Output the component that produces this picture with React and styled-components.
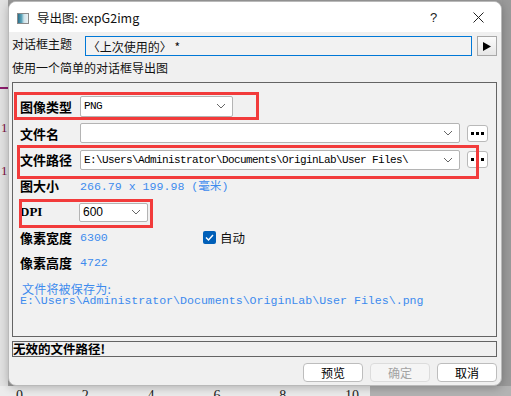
import React from 'react';
import styled, { createGlobalStyle } from 'styled-components';

const GlobalStyle = createGlobalStyle`
  * { box-sizing: border-box; }
  html, body { margin: 0; padding: 0; }
  body {
    width: 511px;
    height: 396px;
    overflow: hidden;
    font-family: "Noto Sans CJK SC", "Liberation Sans", sans-serif;
    background: #9c9c9c;
  }
`;

const CJK = `"Noto Sans CJK SC", "Liberation Sans", sans-serif`;

const Backdrop = styled.div`
  display: grid;
  grid-template-columns: 8px 494px 1fr;
  grid-template-rows: 386px 1fr;
  width: 511px;
  height: 396px;
  overflow: hidden;
`;

const LeftStrip = styled.div`
  background: #e2e2e2;
  display: flex;
  flex-direction: column;
  padding-top: 87px;
`;

const PlotLine = styled.div`
  height: 2px;
  background: #8d1d6e;
`;

const PlotTick = styled.span`
  margin-top: ${({ $top }) => $top}px;
  font-family: "Liberation Serif", serif;
  font-size: 13px;
  line-height: 13px;
  color: #7a1040;
  padding-left: 1px;
`;

const RightStrip = styled.div`
  background: #9a9a9a;
`;

const AxisRow = styled.div`
  grid-column: 1 / 4;
  display: flex;
  background: linear-gradient(to right, #ececec 0, #ececec 370px, #b3b3b3 370px);
  padding-left: 16px;
  overflow: hidden;
`;

const AxisNum = styled.span`
  width: 65.8px;
  font-family: "Liberation Serif", serif;
  font-size: 14px;
  line-height: 14px;
  margin-top: 3px;
  color: #222;
`;

const Window = styled.div`
  margin-top: 1px;
  display: flex;
  flex-direction: column;
  background: #f0f0f0;
  border: 1px solid #b9b9b9;
  border-radius: 8px;
  overflow: hidden;
  box-shadow: 0 2px 10px rgba(0, 0, 0, 0.25);
  position: relative;
  z-index: 1;
`;

const TitleBar = styled.div`
  height: 30px;
  display: flex;
  align-items: center;
  background: #ffffff;
  padding-left: 8px;
`;

const AppIcon = styled.div`
  width: 12px;
  height: 11px;
  border: 1px solid #8a8a8a;
  background: linear-gradient(to right, #2b6e8a 0, #5aa3b8 35%, #cfe3ea 60%, #e9f1f4 100%);
  margin-top: 2px;
`;

const Title = styled.span`
  margin-left: 8px;
  font-family: ${CJK};
  font-size: 12.5px;
  color: #111;
  flex: 1;
`;

const TitleButton = styled.span`
  width: 45px;
  display: flex;
  justify-content: center;
  align-items: center;
  font-family: "Liberation Sans", sans-serif;
  font-size: 13px;
  color: #222;
`;

const Body = styled.div`
  flex: 1;
  display: flex;
  flex-direction: column;
  padding: 4px 4px 0 3px;
`;

const ThemeRow = styled.div`
  display: flex;
  align-items: center;
  height: 20px;
`;

const PlainLabel = styled.span`
  font-family: ${CJK};
  font-size: 12px;
  color: #111;
  width: 73px;
  white-space: nowrap;
  line-height: 16px;
  margin-bottom: ${({ $lift }) => $lift || 0}px;
`;

const ThemeInput = styled.div`
  width: 389px;
  height: 20px;
  border: 1px solid #0078d7;
  background: #f2f2f2;
  display: flex;
  align-items: center;
  padding-left: 2px;
  font-family: ${CJK};
  font-size: 12px;
  color: #111;
`;

const ArrowButton = styled.div`
  width: 20px;
  height: 20px;
  margin-left: 5px;
  border: 1px solid #a8a8a8;
  background: linear-gradient(#fbfbfb, #e6e6e6);
  display: flex;
  align-items: center;
  justify-content: center;
`;

const Description = styled.div`
  font-family: ${CJK};
  font-size: 12px;
  color: #111;
  line-height: 16px;
  margin-top: 4px;
`;

const Panel = styled.div`
  position: relative;
  margin-top: 6px;
  height: 255px;
  border: 1px solid #646464;
  background: #f1f1f1;
  padding: 10px 0 0 7px;
  display: flex;
  flex-direction: column;
`;

const FieldRow = styled.div`
  display: flex;
  align-items: center;
  height: ${({ $h }) => $h}px;
`;

const FieldLabel = styled.span`
  width: 60px;
  font-family: ${({ $mono }) => ($mono ? `"Liberation Serif", serif` : CJK)};
  font-weight: 700;
  font-size: 13px;
  color: #000;
  white-space: nowrap;
`;

const Combo = styled.div`
  width: ${({ $w }) => $w}px;
  height: ${({ $h }) => $h || 20}px;
  margin-left: ${({ $shift }) => $shift || 0}px;
  background: #fff;
  border: 1px solid #b4b4b4;
  border-radius: 2px;
  display: flex;
  align-items: center;
  justify-content: space-between;
  padding: 0 6px 0 3px;
  overflow: hidden;
`;

const PathText = styled.span`
  font-family: "Liberation Mono", monospace;
  font-size: 11px;
  letter-spacing: -0.6px;
  color: #000;
  white-space: nowrap;
`;

const NumberText = styled.span`
  font-family: "Liberation Sans", sans-serif;
  font-size: 12px;
  color: #000;
`;

const DotsButton = styled.div`
  width: 21px;
  height: 17px;
  margin-left: 7px;
  background: #fff;
  border: 1px solid #b9b9b9;
  border-radius: 3px;
  display: flex;
  align-items: center;
  justify-content: center;
  gap: 2px;
`;

const Dot = styled.span`
  width: 3px;
  height: 3px;
  background: #000;
`;

const Value = styled.span`
  width: ${({ $w }) => ($w ? `${$w}px` : 'auto')};
  font-family: "Liberation Mono", "Noto Sans CJK SC", monospace;
  font-size: 11.6px;
  color: #3d8bee;
  white-space: nowrap;
`;

const CheckWrap = styled.label`
  display: flex;
  align-items: center;
  gap: 4px;
  font-family: ${CJK};
  font-size: 12.5px;
  color: #111;
`;

const CheckBox = styled.span`
  width: 13px;
  height: 13px;
  border-radius: 2px;
  background: #005fb8;
  display: flex;
  align-items: center;
  justify-content: center;
`;

const SaveNote = styled.div`
  margin-top: 6px;
  padding-left: 2px;
  display: flex;
  flex-direction: column;
  color: #3d8bee;
`;

const SaveTitle = styled.span`
  font-family: ${CJK};
  font-size: 12px;
  line-height: 13px;
  letter-spacing: 0.2px;
  white-space: nowrap;
`;

const SavePath = styled.span`
  font-family: "Liberation Mono", monospace;
  font-size: 11.6px;
  line-height: 12px;
  margin-left: -2px;
  white-space: nowrap;
`;

const Highlight = styled.div`
  position: absolute;
  left: ${({ $x }) => $x}px;
  top: ${({ $y }) => $y}px;
  width: ${({ $w }) => $w}px;
  height: ${({ $h }) => $h}px;
  border: 3px solid #f23b3b;
  pointer-events: none;
`;

const StatusBox = styled.div`
  margin-top: 4px;
  height: 16px;
  border: 1px solid #646464;
  display: flex;
  align-items: center;
  font-family: ${CJK};
  font-weight: 700;
  font-size: 12.5px;
  color: #000;
  line-height: 14px;
`;

const ButtonRow = styled.div`
  margin-top: 6px;
  display: flex;
  justify-content: flex-end;
  gap: 7px;
`;

const DialogButton = styled.div`
  width: 60px;
  height: 19px;
  border: 1px solid ${({ $disabled }) => ($disabled ? '#dcdcdc' : '#bdbdbd')};
  border-radius: 4px;
  background: ${({ $disabled }) => ($disabled ? '#f5f5f5' : '#ffffff')};
  color: ${({ $disabled }) => ($disabled ? '#a3a3a3' : '#000')};
  display: flex;
  align-items: center;
  justify-content: center;
  font-family: ${CJK};
  font-size: 12px;
`;

const Chevron = () => (
  <svg width="10" height="6" viewBox="0 0 10 6">
    <path d="M1 1 L5 5 L9 1" fill="none" stroke="#666" strokeWidth="1" />
  </svg>
);

const Dots = () => (
  <DotsButton>
    <Dot />
    <Dot />
    <Dot />
  </DotsButton>
);

const App = () => {
  const ticks = [0, 2, 4, 6, 8, 10];
  return (
    <>
      <GlobalStyle />
      <Backdrop>
        <LeftStrip>
          <PlotLine />
          <PlotTick $top={32}>1</PlotTick>
          <PlotTick $top={30}>1</PlotTick>
        </LeftStrip>
        <Window>
          <TitleBar>
            <AppIcon />
            <Title>导出图: expG2img</Title>
            <TitleButton>?</TitleButton>
            <TitleButton>
              <svg width="11" height="11" viewBox="0 0 11 11">
                <path d="M0.5 0.5 L10.5 10.5 M10.5 0.5 L0.5 10.5" stroke="#222" strokeWidth="1" />
              </svg>
            </TitleButton>
          </TitleBar>
          <Body>
            <ThemeRow>
              <PlainLabel $lift={4}>对话框主题</PlainLabel>
              <ThemeInput>〈上次使用的〉 *</ThemeInput>
              <ArrowButton>
                <svg width="8" height="9" viewBox="0 0 8 9">
                  <path d="M0 0 L8 4.5 L0 9 Z" fill="#000" />
                </svg>
              </ArrowButton>
            </ThemeRow>
            <Description>使用一个简单的对话框导出图</Description>
            <Panel>
              <FieldRow $h={26}>
                <FieldLabel>图像类型</FieldLabel>
                <Combo $w={153} $h={21}>
                  <PathText>PNG</PathText>
                  <Chevron />
                </Combo>
              </FieldRow>
              <FieldRow $h={28}>
                <FieldLabel>文件名</FieldLabel>
                <Combo $w={380}>
                  <PathText />
                  <Chevron />
                </Combo>
                <Dots />
              </FieldRow>
              <FieldRow $h={25}>
                <FieldLabel>文件路径</FieldLabel>
                <Combo $w={380}>
                  <PathText>E:\Users\Administrator\Documents\OriginLab\User Files\</PathText>
                  <Chevron />
                </Combo>
                <Dots />
              </FieldRow>
              <FieldRow $h={26}>
                <FieldLabel>图大小</FieldLabel>
                <Value>266.79 x 199.98 (毫米)</Value>
              </FieldRow>
              <FieldRow $h={28}>
                <FieldLabel $mono>DPI</FieldLabel>
                <Combo $w={69} $h={19} $shift={-1}>
                  <NumberText>600</NumberText>
                  <Chevron />
                </Combo>
              </FieldRow>
              <FieldRow $h={23}>
                <FieldLabel>像素宽度</FieldLabel>
                <Value $w={123}>6300</Value>
                <CheckWrap>
                  <CheckBox>
                    <svg width="9" height="7" viewBox="0 0 9 7">
                      <path d="M1 3.5 L3.5 6 L8 1" fill="none" stroke="#fff" strokeWidth="1.4" />
                    </svg>
                  </CheckBox>
                  自动
                </CheckWrap>
              </FieldRow>
              <FieldRow $h={27}>
                <FieldLabel>像素高度</FieldLabel>
                <Value>4722</Value>
              </FieldRow>
              <SaveNote>
                <SaveTitle>文件将被保存为:</SaveTitle>
                <SavePath>E:\Users\Administrator\Documents\OriginLab\User Files\.png</SavePath>
              </SaveNote>
              <Highlight $x={1} $y={9} $w={245} $h={28} />
              <Highlight $x={4} $y={62} $w={462} $h={34} />
              <Highlight $x={6} $y={116} $w={134} $h={29} />
            </Panel>
            <StatusBox>无效的文件路径!</StatusBox>
            <ButtonRow>
              <DialogButton>预览</DialogButton>
              <DialogButton $disabled>确定</DialogButton>
              <DialogButton>取消</DialogButton>
            </ButtonRow>
          </Body>
        </Window>
        <RightStrip />
        <AxisRow>
          {ticks.map((t) => (
            <AxisNum key={t}>{t}</AxisNum>
          ))}
        </AxisRow>
      </Backdrop>
    </>
  );
};

export default App;
